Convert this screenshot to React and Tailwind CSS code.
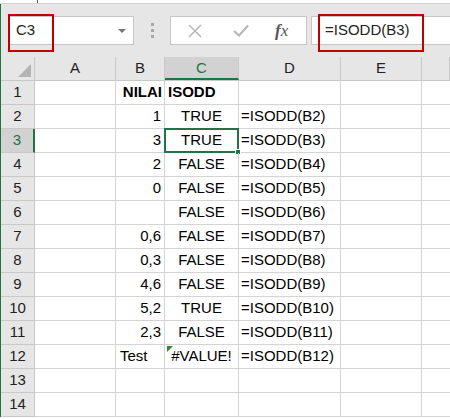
import React from 'react';

const cols = [
  { key: 'A', w: 'w-[81px]' },
  { key: 'B', w: 'w-[49px]' },
  { key: 'C', w: 'w-[74px]' },
  { key: 'D', w: 'w-[102px]' },
  { key: 'E', w: 'w-[81px]' },
  { key: '', w: 'flex-1' },
];

const rows = [
  { b: 'NILAI', c: 'ISODD', d: '', head: true },
  { b: '1', c: 'TRUE', d: '=ISODD(B2)' },
  { b: '3', c: 'TRUE', d: '=ISODD(B3)' },
  { b: '2', c: 'FALSE', d: '=ISODD(B4)' },
  { b: '0', c: 'FALSE', d: '=ISODD(B5)' },
  { b: '', c: 'FALSE', d: '=ISODD(B6)' },
  { b: '0,6', c: 'FALSE', d: '=ISODD(B7)' },
  { b: '0,3', c: 'FALSE', d: '=ISODD(B8)' },
  { b: '4,6', c: 'FALSE', d: '=ISODD(B9)' },
  { b: '5,2', c: 'TRUE', d: '=ISODD(B10)' },
  { b: '2,3', c: 'FALSE', d: '=ISODD(B11)' },
  { b: 'Test', c: '#VALUE!', d: '=ISODD(B12)', error: true },
  { b: '', c: '', d: '' },
  { b: '', c: '', d: '' },
];

const font = { fontFamily: '"Liberation Sans", Arial, sans-serif' };

function ColumnHeaders() {
  return (
    <div className="flex h-[24px] bg-[#e6e6e6] border-b border-[#c8c8c8]">
      <div className="relative w-[34px] shrink-0 border-r border-[#c8c8c8]">
        <div className="absolute right-[3px] bottom-[3px] w-0 h-0 border-l-[13px] border-l-transparent border-b-[13px] border-b-[#b4b4b4]" />
      </div>
      {cols.map((c, i) => {
        const sel = c.key === 'C';
        return (
          <div
            key={i}
            className={`${c.w} shrink-0 flex items-center justify-center text-[15px] border-r border-[#c8c8c8] ${
              sel ? 'bg-[#d2d2d2] text-[#217346] border-b-2 border-b-[#217346] pt-[2px]' : 'text-[#222]'
            }`}
          >
            {c.key}
          </div>
        );
      })}
    </div>
  );
}

function Row({ r, i }) {
  const n = i + 1;
  const selRow = n === 3;
  return (
    <div className="flex h-[24px]">
      <div
        className={`w-[34px] shrink-0 flex items-center justify-center text-[15px] border-b border-[#c8c8c8] ${
          selRow ? 'bg-[#d2d2d2] text-[#217346] border-r-2 border-r-[#217346]' : 'bg-[#e6e6e6] text-[#222] border-r border-r-[#c8c8c8]'
        }`}
      >
        {n}
      </div>
      <div className="w-[81px] shrink-0 border-r border-b border-[#d4d4d4]" />
      <div
        className={`w-[49px] shrink-0 border-r border-b border-[#d4d4d4] flex items-center text-[15px] ${
          r.head ? 'justify-end font-bold px-[2px]' : r.b === 'Test' ? 'justify-start pl-[4px]' : 'justify-end px-[3px]'
        }`}
      >
        {r.b}
      </div>
      <div
        className={`relative w-[74px] shrink-0 border-r border-b border-[#d4d4d4] flex items-center px-[3px] text-[15px] ${
          r.head ? 'justify-start font-bold' : 'justify-center'
        }`}
      >
        {r.error && (
          <div className="absolute left-[2px] top-[1px] w-0 h-0 border-r-[6px] border-r-transparent border-t-[6px] border-t-[#2d8a3b]" />
        )}
        {selRow && (
          <div className="absolute -left-px -top-px -right-px -bottom-px border-2 border-[#217346]">
            <div className="absolute -right-[4px] -bottom-[4px] w-[6px] h-[6px] bg-[#217346] border border-white" />
          </div>
        )}
        <span className="relative">{r.c}</span>
      </div>
      <div className="w-[102px] shrink-0 border-r border-b border-[#d4d4d4] flex items-center px-[2px] text-[15px] whitespace-nowrap">
        {r.d}
      </div>
      <div className="w-[81px] shrink-0 border-r border-b border-[#d4d4d4]" />
      <div className="flex-1 border-b border-[#d4d4d4]" />
    </div>
  );
}

export default function App() {
  return (
    <div className="w-[450px] h-[419px] overflow-hidden bg-white text-black" style={font}>
      <div className="h-[4px] bg-white border-b border-[#d0d0d0] relative">
        <div className="absolute left-[37px] top-0 w-px h-[3px] bg-[#555]" />
      </div>
      <div className="border-l border-[#217346]">
        <div className="relative h-[53px] bg-[#e6e6e6] flex items-center">
          <div className="ml-[8px] w-[125px] h-[29px] bg-white border border-[#c6c6c6] flex items-center justify-between pl-[6px] pr-[7px]">
            <span className="text-[15px] text-[#222]">C3</span>
            <div className="w-0 h-0 border-l-[4px] border-r-[4px] border-t-[4px] border-l-transparent border-r-transparent border-t-[#777]" />
          </div>
          <div className="ml-[17px] flex flex-col gap-[3px]">
            <div className="w-[3px] h-[3px] bg-[#a8a8a8]" />
            <div className="w-[3px] h-[3px] bg-[#a8a8a8]" />
            <div className="w-[3px] h-[3px] bg-[#a8a8a8]" />
          </div>
          <div className="ml-[16px] w-[137px] h-[29px] bg-white border border-[#c6c6c6] flex items-center">
            <svg className="ml-[17px]" width="14" height="14" viewBox="0 0 14 14">
              <path d="M1 1 L13 13 M13 1 L1 13" stroke="#b8b8b8" strokeWidth="1.6" fill="none" />
            </svg>
            <svg className="ml-[31px]" width="16" height="13" viewBox="0 0 16 13">
              <path d="M1 7 L6 11.5 L15 1.5" stroke="#b8b8b8" strokeWidth="2.2" fill="none" />
            </svg>
            <span
              className="ml-[26px] text-[17px] italic text-[#555]"
              style={{ fontFamily: '"Liberation Serif", "Times New Roman", serif' }}
            >
              <span className="font-bold">f</span>x
            </span>
          </div>
          <div className="ml-[4px] flex-1 h-[29px] bg-white border border-[#c6c6c6] border-r-0 flex items-center pl-[13px]">
            <span className="text-[15px] text-[#222]">=ISODD(B3)</span>
          </div>
          <div className="absolute left-[7px] top-[10px] w-[46px] h-[38px] border-2 border-[#c00000]" />
          <div className="absolute left-[317px] top-[10px] w-[106px] h-[38px] border-2 border-[#c00000]" />
        </div>
        <ColumnHeaders />
        {rows.map((r, i) => (
          <Row key={i} r={r} i={i} />
        ))}
      </div>
    </div>
  );
}
